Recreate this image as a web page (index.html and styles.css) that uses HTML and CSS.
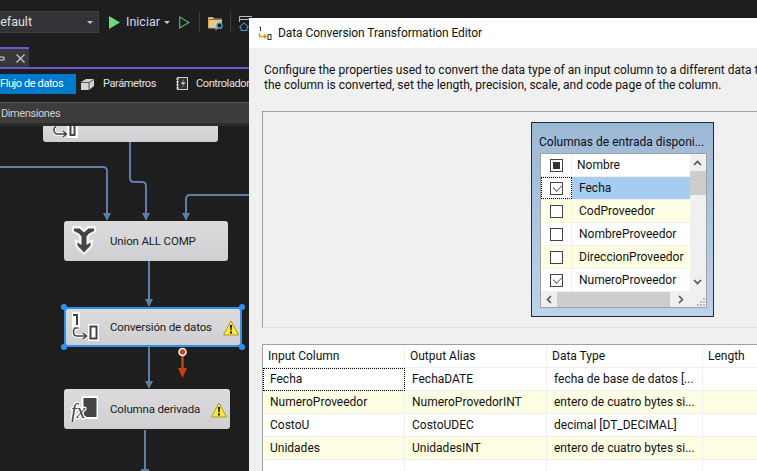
FILE: index.html
```html
<!DOCTYPE html>
<html lang="es">
<head>
<meta charset="utf-8">
<title>Data Conversion Transformation Editor</title>
<link rel="stylesheet" href="styles.css">
</head>
<body>
<div class="desktop">
  <section class="ide">
    <header class="toolbar">
      <div class="combo"><span class="combo-text">Default</span><span class="caret"></span></div>
      <svg class="tb-play" width="11" height="13" viewBox="0 0 11 13"><path d="M0 0L11 6.5L0 13Z" fill="#71d77c"/></svg>
      <span class="tb-label">Iniciar</span>
      <span class="caret"></span>
      <svg class="tb-outline" width="11" height="13" viewBox="0 0 11 13"><path d="M.7 1L10 6.5L.7 12Z" fill="none" stroke="#5fae67" stroke-width="1.2"/></svg>
      <span class="tb-sep"></span>
      <svg class="tb-folder" width="16" height="15" viewBox="0 0 16 15"><path d="M.5 1.5H5L6 3H13.5V12H.5Z" fill="#e8c88a" stroke="#c9a86a"/><path d="M1 3.5H13" stroke="#7d6a45"/><circle cx="11.5" cy="9.5" r="2.6" fill="#1e1e1e" stroke="#4aa3e8" stroke-width="1.2"/><path d="M9.6 11.6L7.5 14" stroke="#4aa3e8" stroke-width="1.4"/></svg>
      <span class="tb-sep tb-sep2"></span>
      <svg class="tb-home" width="13" height="15" viewBox="0 0 13 15"><path d="M.5 .5H13M.5 .5V6M.5 3.5H13" stroke="#bbb" fill="none"/><path d="M5 7L.5 11H2V14.5H8V11H9.5Z" fill="#1e1e1e" stroke="#4aa3e8"/></svg>
    </header>
    <div class="doc-tabs">
      <div class="doc-tab">
        <svg width="5" height="5" viewBox="0 0 5 5"><path d="M0 1H4V4H0" fill="none" stroke="#ddd"/></svg>
        <svg class="doc-close" width="9" height="9" viewBox="0 0 9 9"><path d="M.5 .5L8.5 8.5M8.5 .5L.5 8.5" stroke="#ccc" stroke-width="1.2"/></svg>
      </div>
    </div>
    <nav class="designer-tabs">
      <span class="dtab active">Flujo de datos</span>
      <svg class="dtab-icon" width="15" height="13" viewBox="0 0 15 13"><path d="M1 4L6 1H14V8L9 12H1Z" fill="#d4d4d4"/><path d="M1 4.5H9L14 1.5M9 4.5V12" stroke="#1e1e1e" fill="none" stroke-width=".7"/></svg>
      <span class="dtab">Parámetros</span>
      <svg class="dtab-icon dtab-icon2" width="12" height="13" viewBox="0 0 12 13"><rect x="1.5" y=".5" width="10" height="12" fill="#333" stroke="#d4d4d4"/><path d="M0 2H3M0 5H3M0 8H3M0 11H3" stroke="#d4d4d4"/><path d="M8 2L5 7H7.5L5.5 11L9.500 5.500H7Z" fill="#d4d4d4"/></svg>
      <span class="dtab dtab-clip">Controlador</span>
    </nav>
    <div class="package-bar">Dimensiones</div>
    <div class="canvas">
      <svg class="wires" width="249" height="345" viewBox="0 126 249 345">
        <g fill="none" stroke="#5f7ea6" stroke-width="2">
          <path d="M0 167H103Q107 167 107 171V214"/>
          <path d="M130 142V178Q130 182 134 182H142Q146 182 146 186V214"/>
          <path d="M249 195H190Q186 195 186 199V215"/>
          <path d="M149 261V301"/>
          <path d="M149 347V383"/>
          <path d="M145 430V471"/>
        </g>
        <g fill="#5f7ea6">
          <path d="M103 213H111L107 221Z"/>
          <path d="M142 213H150L146 221Z"/>
          <path d="M182 213H190L186 221Z"/>
          <path d="M145 299H153L149 307Z"/>
          <path d="M145 381H153L149 389Z"/>
          <path d="M141 469H149V471H141Z"/>
        </g>
        <path d="M182.500 356V370" stroke="#c8400f" stroke-width="2.500"/>
        <path d="M178 368H187L182.500 378Z" fill="#c8400f"/>
        <circle cx="182.500" cy="352" r="3.500" fill="#c8400f" stroke="#fff" stroke-width="1.500"/>
      </svg>

      <div class="node node-top">
        <svg class="ico" width="36" height="14" viewBox="0 0 36 14">
          <path d="M3 1H2.500Q1 1 1 4Q1 8 5 8H13M10 5L13.500 8L10 11" fill="none" stroke="#fff" stroke-width="3.500"/>
          <path d="M3 1H2.500Q1 1 1 4Q1 8 5 8H13M10 5L13.500 8L10 11" fill="none" stroke="#444" stroke-width="1.600"/>
          <rect x="14" y="0" width="11" height="12" fill="#fff"/>
          <rect x="17.500" y="-2" width="4" height="11" fill="#fff" stroke="#444" stroke-width="2"/>
        </svg>
      </div>

      <div class="node node-union">
        <svg class="ico" width="24" height="30" viewBox="0 0 24 30">
          <path d="M0 0H8L12 3L16 0H24V6L19 8.500L17 11V15L21 13V20L12 29.500L3 20V13L7 15V11L5 8.500L0 6Z" fill="#f6f6f6"/>
          <path d="M2 2.500H7.500L12 6.500L16.500 2.500H22V5L17 7.500L14.500 10.500V19L18.500 16.500V19.500L12 26.500L5.500 19.500V16.500L9.500 19V10.500L7 7.500L2 5Z" fill="#444"/>
        </svg>
        <span class="node-label">Union ALL COMP</span>
      </div>

      <div class="node node-conv">
        <svg class="ico" width="29" height="30" viewBox="0 0 29 30">
          <rect x="0" y="0" width="8" height="15" fill="#fff"/>
          <path d="M1 3H5V13" fill="none" stroke="#444" stroke-width="2"/>
          <path d="M6 16H4Q1.500 16 1.500 20Q1.500 24 5 24H14M11 21L14.500 24L11 27" fill="none" stroke="#fff" stroke-width="3.500"/>
          <path d="M6 16H4Q1.500 16 1.500 20Q1.500 24 5 24H14M11 21L14.500 24L11 27" fill="none" stroke="#444" stroke-width="1.600"/>
          <rect x="16" y="12" width="11" height="17" fill="#fff"/>
          <rect x="18.500" y="14.500" width="6" height="12" fill="#fff" stroke="#444" stroke-width="2"/>
        </svg>
        <span class="node-label">Conversión de datos</span>
        <svg class="warn" width="16" height="16" viewBox="0 0 16 16"><path d="M8 1L15.500 15H.5Z" fill="#ffe83a" stroke="#a69a2a" stroke-linejoin="round"/><path d="M7 5H9L8.600 10.500H7.400Z" fill="#111"/><rect x="7" y="11.500" width="2" height="2" fill="#111"/></svg>
        <i class="handle h-tl"></i><i class="handle h-tr"></i><i class="handle h-bl"></i><i class="handle h-br"></i>
      </div>

      <div class="node node-col">
        <svg class="ico" width="28" height="26" viewBox="0 0 28 26">
          <rect x="12.500" y="1" width="15" height="21" fill="#444" stroke="#fff" stroke-width="2"/>
          <text class="fx fx-halo" x="1" y="22">fx</text>
          <text class="fx" x="1" y="22">fx</text>
        </svg>
        <span class="node-label">Columna derivada</span>
        <svg class="warn" width="16" height="16" viewBox="0 0 16 16"><path d="M8 1L15.500 15H.5Z" fill="#ffe83a" stroke="#a69a2a" stroke-linejoin="round"/><path d="M7 5H9L8.600 10.500H7.400Z" fill="#111"/><rect x="7" y="11.500" width="2" height="2" fill="#111"/></svg>
      </div>
    </div>
  </section>

  <section class="dialog">
    <div class="titlebar">
      <svg width="14" height="15" viewBox="0 0 14 15"><path d="M2.500 1V5M1.500 1.500L2.500 1" stroke="#333" fill="none"/><path d="M1.500 7V10.500H8M6 8.500L8.500 10.500L6 12.500" stroke="#d9a020" stroke-width="1.500" fill="none"/><rect x="10" y="8.500" width="3" height="5" fill="none" stroke="#333"/></svg>
      <span class="title-text">Data Conversion Transformation Editor</span>
    </div>
    <div class="dlg-body">
      <p class="intro">Configure the properties used to convert the data type of an input column to a different data type.<br>the column is converted, set the length, precision, scale, and code page of the column.</p>
      <div class="mapping">
        <div class="input-box">
          <div class="input-title">Columnas de entrada disponi...</div>
          <div class="list">
            <div class="list-main">
              <div class="list-rows">
                <div class="lrow lhead"><span class="lcheck"><i class="cb cb-mixed"></i></span><span class="lname">Nombre</span></div>
                <div class="lrow lsel"><span class="lcheck"><i class="cb cb-on"></i></span><span class="lname">Fecha</span></div>
                <div class="lrow lalt"><span class="lcheck"><i class="cb"></i></span><span class="lname">CodProveedor</span></div>
                <div class="lrow"><span class="lcheck"><i class="cb"></i></span><span class="lname">NombreProveedor</span></div>
                <div class="lrow lalt"><span class="lcheck"><i class="cb"></i></span><span class="lname">DireccionProveedor</span></div>
                <div class="lrow"><span class="lcheck"><i class="cb cb-on"></i></span><span class="lname">NumeroProveedor</span></div>
              </div>
              <div class="vscroll">
                <svg width="9" height="6" viewBox="0 0 9 6"><path d="M1 5L4.500 1.500L8 5" fill="none" stroke="#555" stroke-width="1.600"/></svg>
                <span class="vthumb"></span>
                <svg class="vdown" width="9" height="6" viewBox="0 0 9 6"><path d="M1 1L4.500 4.500L8 1" fill="none" stroke="#555" stroke-width="1.600"/></svg>
              </div>
            </div>
            <div class="hscroll">
              <svg width="6" height="9" viewBox="0 0 6 9"><path d="M5 1L1.500 4.500L5 8" fill="none" stroke="#555" stroke-width="1.600"/></svg>
              <span class="hthumb"></span>
              <svg width="6" height="9" viewBox="0 0 6 9"><path d="M1 1L4.500 4.500L1 8" fill="none" stroke="#555" stroke-width="1.600"/></svg>
              <svg class="grip" width="8" height="8" viewBox="0 0 8 8"><path d="M6 0h2v2H6zM3 3h2v2H3zM6 3h2v2H6zM0 6h2v2H0zM3 6h2v2H3zM6 6h2v2H6z" fill="#bbb"/></svg>
            </div>
          </div>
        </div>
      </div>
      <div class="grid">
        <div class="gc gh">Input Column</div><div class="gc gh">Output Alias</div><div class="gc gh">Data Type</div><div class="gc gh">Length</div>
        <div class="gc gfocus">Fecha</div><div class="gc">FechaDATE</div><div class="gc">fecha de base de datos [...</div><div class="gc"></div>
        <div class="gc alt">NumeroProveedor</div><div class="gc alt">NumeroProvedorINT</div><div class="gc alt">entero de cuatro bytes si...</div><div class="gc alt"></div>
        <div class="gc">CostoU</div><div class="gc">CostoUDEC</div><div class="gc">decimal [DT_DECIMAL]</div><div class="gc"></div>
        <div class="gc alt">Unidades</div><div class="gc alt">UnidadesINT</div><div class="gc alt">entero de cuatro bytes si...</div><div class="gc alt"></div>
        <div class="gc"></div><div class="gc"></div><div class="gc"></div><div class="gc"></div>
      </div>
    </div>
  </section>
</div>
</body>
</html>
```
FILE: styles.css
```css
* { box-sizing: border-box; }
html, body { margin: 0; padding: 0; }
body { width: 757px; height: 471px; overflow: hidden; background: #1e1e1e; font-family: Roboto, "Noto Sans", sans-serif; font-size: 12px; }
svg { display: block; flex: none; }

.desktop { position: relative; width: 757px; height: 471px; overflow: hidden; background: #1e1e1e; }

/* IDE */
.ide { width: 260px; height: 471px; display: flex; flex-direction: column; color: #e4e4e4; }
.toolbar { height: 47px; display: flex; align-items: flex-start; padding-top: 11px; }
.combo { width: 99px; height: 22px; background: #333337; border: 1px solid #3f3f42; border-left: 0; display: flex; align-items: center; justify-content: space-between; padding-right: 5px; overflow: hidden; }
.combo-text { margin-left: -8px; color: #e0e0e0; line-height: 20px; font-size: 12.5px; }
.caret { width: 0; height: 0; border-left: 3px solid transparent; border-right: 3px solid transparent; border-top: 3px solid #c8c8c8; flex: none; }
.tb-play { margin: 5px 0 0 10px; }
.tb-label { margin: 2px 0 0 6px; color: #d0d8f0; line-height: 18px; width: 32px; flex: none; font-size: 12.5px; }
.toolbar > .caret { margin: 10px 0 0 6px; }
.tb-outline { margin: 5px 0 0 9px; }
.tb-sep { width: 1px; height: 20px; background: #3c3c3c; margin: 1px 0 0 9px; }
.tb-folder { margin: 5px 0 0 8px; }
.tb-sep2 { margin-left: 6px; }
.tb-home { margin: 5px 0 0 8px; }

.doc-tabs { height: 22px; border-bottom: 2px solid #6a56d6; }
.doc-tab { width: 29px; height: 20px; background: #383838; border-top: 2px solid #6a56d6; display: flex; align-items: center; gap: 11px; padding-left: 0; }
.doc-close { margin-top: 1px; }

.designer-tabs { height: 33px; display: flex; align-items: flex-start; padding-top: 5px; width: 249px; overflow: hidden; font-size: 11px; letter-spacing: -.4px; }
.dtab { line-height: 20px; height: 20px; color: #e4e4e4; white-space: nowrap; flex: none; }
.dtab.active { width: 76px; background: #007acc; color: #fff; overflow: hidden; }
.dtab-icon { margin: 4px 8px 0 4px; }
.dtab-icon2 { margin: 3px 8px 0 20px; }

.package-bar { height: 24px; background: #3c3c3c; border-top: 1px solid #555; border-bottom: 3px solid #2d2d2d; color: #d0d0d0; line-height: 22px; padding-left: 1px; width: 249px; font-size: 11px; letter-spacing: -.4px; }

.canvas { position: relative; flex: 1; width: 249px; overflow: hidden; }
.wires { position: absolute; left: 0; top: 0; }
.node { position: absolute; display: flex; align-items: center; border-radius: 3px; background: linear-gradient(#dcdcde, #cfcfd1); color: #1a1a1a; }
.node-label { white-space: nowrap; font-size: 11.5px; letter-spacing: -.15px; }
.ico { position: absolute; }
.warn { position: absolute; }
.node-top { left: 43px; top: -4px; width: 175px; height: 20px; }
.node-top .ico { left: 10px; top: 4px; }
.node-union { left: 64px; top: 95px; width: 164px; height: 40px; padding-left: 46px; }
.node-union .ico { left: 8px; top: 5px; }
.node-conv { left: 64px; top: 181px; width: 178px; height: 40px; padding-left: 44px; border: 2px solid #2f91ee; border-radius: 4px; }
.node-conv .ico { left: 6px; top: 3px; }
.node-conv .warn { left: 157px; top: 11px; }
.node-col { left: 64px; top: 263px; width: 166px; height: 40px; padding-left: 46px; }
.node-col .ico { left: 6px; top: 7px; }
.node-col .warn { left: 147px; top: 13px; }
.fx { font-family: "Liberation Serif", serif; font-style: italic; font-size: 20px; fill: #444; }
.fx-halo { stroke: #fff; stroke-width: 2.500px; }
.handle { position: absolute; width: 6px; height: 6px; border-radius: 50%; background: #2f91ee; }
.h-tl { left: -5px; top: -5px; }
.h-tr { right: -5px; top: -5px; }
.h-bl { left: -5px; bottom: -5px; }
.h-br { right: -5px; bottom: -5px; }

/* Dialog */
.dialog { position: absolute; left: 249px; top: 18px; width: 508px; height: 453px; background: #f0f0f0; color: #111; display: flex; flex-direction: column; }
.titlebar { height: 30px; background: #fff; display: flex; align-items: center; gap: 6px; padding-left: 9px; flex: none; }
.title-text { letter-spacing: -.08px; }
.dlg-body { flex: 1; padding: 15px 0 0 13px; overflow: hidden; }
.intro { margin: 0 0 0 2px; width: 700px; line-height: 15px; height: 48px; white-space: nowrap; }
.mapping { height: 217px; margin-right: -1px; border-top: 1px solid #a0a0a0; border-left: 1px solid #a0a0a0; border-bottom: 1px solid #e0e0e0; position: relative; }
.input-box { position: absolute; left: 268px; top: 10px; width: 183px; height: 195px; border: 1px solid #1c2c3c; background: linear-gradient(#9db8d5, #bcd3ea); padding: 0 7px 7px 8px; display: flex; flex-direction: column; }
.input-title { height: 30px; padding-top: 10px; line-height: 19px; white-space: nowrap; color: #0d0d20; margin-left: -1px; }
.list { width: 167px; height: 155px; border: 1px solid #a0a0a0; background: #f0f0f0; display: flex; flex-direction: column; }
.list-main { display: flex; height: 138px; }
.list-rows { width: 149px; background: #fff; overflow: hidden; }
.lrow { height: 23px; display: flex; border-bottom: 1px solid #f0f0f0; background: #fff; }
.lcheck { width: 31px; flex: none; display: flex; align-items: center; justify-content: center; border-right: 1px solid #f0f0f0; position: relative; z-index: 1; }
.lname { padding-left: 7px; line-height: 22px; white-space: nowrap; flex: 1; }
.lhead .lname { padding-left: 5px; }
.lalt { background: #fefee2; }
.lsel .lname { background: #a6cdf0; }
.lsel .lcheck { border: 1px dotted #000; }
.cb { width: 13px; height: 13px; border: 1px solid #444; background: #fff; display: block; position: relative; }
.cb-mixed::after { content: ""; position: absolute; inset: 2px; background: #333; }
.cb-on::after { content: ""; position: absolute; left: 2px; top: 1px; width: 8px; height: 5px; border-left: 1.5px solid #555; border-bottom: 1.5px solid #555; transform: rotate(-45deg) scale(.9); }
.vscroll { width: 16px; position: relative; background: #f0f0f0; padding: 6px 0 0 3px; }
.vthumb { position: absolute; left: 0; top: 17px; width: 16px; height: 24px; background: #cdcdcd; }
.vdown { position: absolute; left: 3px; top: 125px; }
.hscroll { height: 16px; display: flex; align-items: center; padding-left: 5px; position: relative; }
.hthumb { width: 113px; height: 15px; background: #cdcdcd; margin: 0 8px 0 5px; }
.grip { position: absolute; right: 1px; bottom: 1px; }

.grid { margin-top: 16px; margin-right: -1px; display: grid; grid-template-columns: 142px 142px 156px 60px; grid-auto-rows: 23px; border-top: 1px solid #a0a0a0; border-left: 1px solid #a0a0a0; background: #fff; width: 496px; }
.gc { padding-left: 7px; line-height: 22px; border-right: 1px solid #f0f0f0; border-bottom: 1px solid #f0f0f0; white-space: nowrap; overflow: hidden; background: #fff; }
.gh { padding-left: 5px; }
.gc.alt { background: #fefee2; }
.gfocus { outline: 1px dotted #000; outline-offset: -1px; }
```
